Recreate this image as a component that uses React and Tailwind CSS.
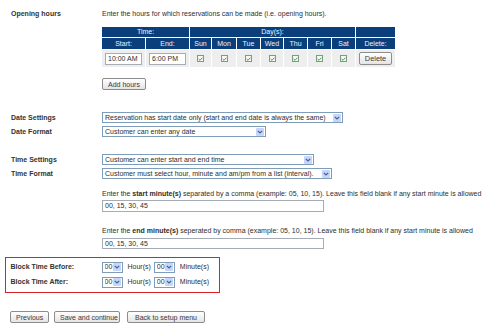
import React from "react";

const DAYS = ["Sun", "Mon", "Tue", "Wed", "Thu", "Fri", "Sat"];
const DAY_WIDTHS = ["w-[22px]", "w-[25px]", "w-[24px]", "w-[23px]", "w-[24px]", "w-[24px]", "w-[24px]"];

const Select = ({ value, className = "" }) => (
  <div
    className={`flex items-center h-[11px] border border-[#7f9db9] bg-white pl-[2px] pr-[1px] ${className}`}
  >
    <span className="flex-1 truncate whitespace-nowrap">{value}</span>
    <span className="flex items-center justify-center w-[8px] h-[8px] bg-[#c6d5fa] rounded-[1px]">
      <svg width="6" height="4" viewBox="0 0 6 4">
        <path d="M0.8 0.8 L3 3 L5.2 0.8" fill="none" stroke="#4a5f8c" strokeWidth="1.2" />
      </svg>
    </span>
  </div>
);

const SmallSelect = () => <Select value="00" className="w-[21px] h-[10px]" />;

const Button = ({ children, className = "" }) => (
  <button
    className={`h-[12px] px-[5px] border border-[#8c8c8c] rounded-[2px] bg-gradient-to-b from-white to-[#e4e4e4] text-[#3a3a3a] leading-none whitespace-nowrap ${className}`}
  >
    {children}
  </button>
);

const CheckBox = () => (
  <span className="inline-flex items-center justify-center w-[7px] h-[7px] border border-[#7d9a85] bg-[#f6f8f4]">
    <svg width="5" height="4" viewBox="0 0 5 4">
      <path d="M0.5 2 L2 3.3 L4.5 0.6" fill="none" stroke="#3aa83a" strokeWidth="1" />
    </svg>
  </span>
);

const TextBox = ({ value, className = "" }) => (
  <div
    className={`flex items-center h-[11px] border border-[#a5acb5] bg-white pl-[2px] whitespace-nowrap ${className}`}
  >
    {value}
  </div>
);

const Label = ({ children }) => (
  <div className="w-[97px] shrink-0 pl-[6px] font-bold text-[#333]">{children}</div>
);

export default function App() {
  const head = "bg-[#0b3f7c] text-[#eef2f8] font-normal border border-white text-center p-0";

  return (
    <div className="w-[500px] h-[324px] overflow-hidden bg-white font-['Liberation_Sans',Arial,sans-serif] text-[7px] leading-[10px] text-[#2e2e2e] pl-[5px] pt-[9px]">
      {/* Opening hours */}
      <div className="flex">
        <Label>Opening hours</Label>
        <div>
          <div>Enter the hours for which reservations can be made (i.e. opening hours).</div>
          <table className="mt-[7px] border-collapse -ml-px">
            <thead>
              <tr className="h-[11px]">
                <th colSpan={2} className={head}>Time:</th>
                <th colSpan={7} className={head}>Day(s):</th>
                <th className={head}></th>
              </tr>
              <tr className="h-[12px]">
                <th className={`${head} w-[42px]`}>Start:</th>
                <th className={`${head} w-[44px]`}>End:</th>
                {DAYS.map((d, i) => (
                  <th key={d} className={`${head} ${DAY_WIDTHS[i]}`}>{d}</th>
                ))}
                <th className={`${head} w-[40px]`}>Delete:</th>
              </tr>
            </thead>
            <tbody>
              <tr className="h-[18px] bg-[#eeeeee]">
                <td className="border border-white px-[3px]">
                  <TextBox value="10:00 AM" className="w-[37px] h-[12px]" />
                </td>
                <td className="border border-white px-[3px]">
                  <TextBox value="6:00 PM" className="w-[37px] h-[12px]" />
                </td>
                {DAYS.map((d) => (
                  <td key={d} className="border border-white text-center">
                    <CheckBox />
                  </td>
                ))}
                <td className="border border-white text-center">
                  <Button className="px-[3px] h-[13px] text-[7.4px]">Delete</Button>
                </td>
              </tr>
            </tbody>
          </table>
          <Button className="mt-[10px]">Add hours</Button>
        </div>
      </div>

      {/* Date settings */}
      <div className="mt-[22px] flex flex-col gap-[3px]">
        <div className="flex items-center">
          <Label>Date Settings</Label>
          <Select
            value="Reservation has start date only (start and end date is always the same)"
            className="w-[241px]"
          />
        </div>
        <div className="flex items-center">
          <Label>Date Format</Label>
          <Select value="Customer can enter any date" className="w-[164px]" />
        </div>
      </div>

      {/* Time settings */}
      <div className="mt-[17px] flex flex-col gap-[3px]">
        <div className="flex items-center">
          <Label>Time Settings</Label>
          <Select value="Customer can enter start and end time" className="w-[212px]" />
        </div>
        <div className="flex items-center">
          <Label>Time Format</Label>
          <Select
            value="Customer must select hour, minute and am/pm from a list (interval)."
            className="w-[230px]"
          />
        </div>
      </div>

      {/* Minutes */}
      <div className="ml-[97px] mt-[10px]">
        <div className="whitespace-nowrap">
          Enter the <b>start minute(s)</b> separated by a comma (example: 05, 10, 15). Leave this field blank if any start minute is allowed
        </div>
        <TextBox value="00, 15, 30, 45" className="w-[222px] mt-[1px] h-[12px]" />
        <div className="whitespace-nowrap mt-[14px]">
          Enter the <b>end minute(s)</b> seperated by comma (example: 05, 10, 15). Leave this field blank if any start minute is allowed
        </div>
        <TextBox value="00, 15, 30, 45" className="w-[222px] mt-[2px]" />
      </div>

      {/* Block time */}
      <div className="mt-[8px] w-[215px] border-[1.5px] border-[#d9222a] pl-[4.5px] pt-[4px] pb-[5px] flex flex-col gap-[5px]">
        {["Block Time Before:", "Block Time After:"].map((l) => (
          <div key={l} className="flex items-center h-[10px]">
            <div className="w-[91px] shrink-0 font-bold text-[#333]">{l}</div>
            <SmallSelect />
            <span className="ml-[5px] mr-[3px]">Hour(s)</span>
            <SmallSelect />
            <span className="ml-[5px]">Minute(s)</span>
          </div>
        ))}
      </div>

      {/* Buttons */}
      <div className="mt-[18px] ml-[5px] flex gap-[5px]">
        <Button className="w-[39px]">Previous</Button>
        <Button className="w-[66px]">Save and continue</Button>
        <Button className="w-[78px] ml-[2px]">Back to setup menu</Button>
      </div>
    </div>
  );
}
